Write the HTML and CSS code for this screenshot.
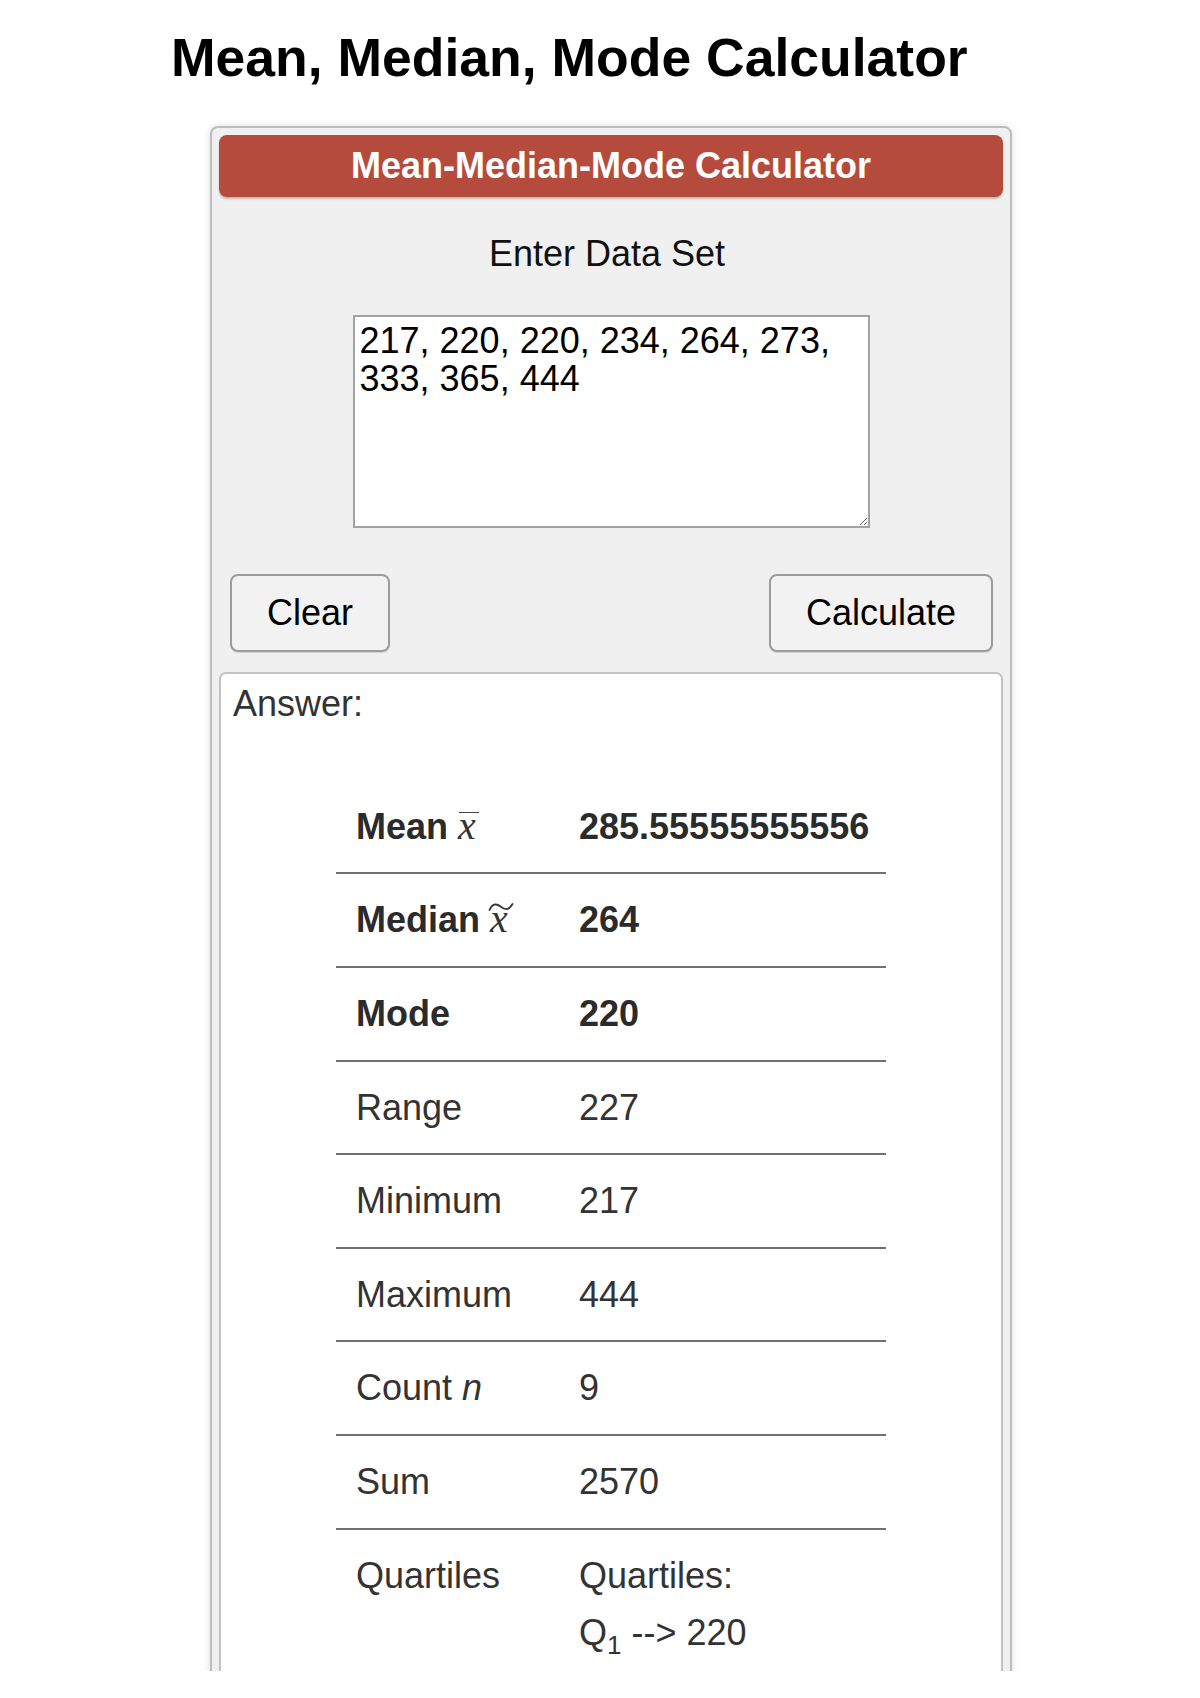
FILE: index.html
```html
<!DOCTYPE html>
<html lang="en">
<head>
<meta charset="utf-8">
<title>Mean, Median, Mode Calculator</title>
<link rel="stylesheet" href="styles.css">
</head>
<body>
<div class="page">
  <h1 class="title">Mean, Median, Mode Calculator</h1>
  <div class="card">
    <div class="card-head">Mean-Median-Mode Calculator</div>
    <div class="label">Enter Data Set</div>
    <textarea class="data" spellcheck="false">217, 220, 220, 234, 264, 273, 333, 365, 444</textarea>
    <div class="actions">
      <button class="btn" type="button">Clear</button>
      <button class="btn" type="button">Calculate</button>
    </div>
    <div class="answer">
      <div class="answer-label">Answer:</div>
      <table class="results">
        <colgroup><col class="c1"><col class="c2"></colgroup>
        <tbody>
          <tr class="strong"><td>Mean <span class="math bar">x</span></td><td>285.55555555556</td></tr>
          <tr class="strong"><td>Median <span class="math tilde">x<svg class="tilde-mark" viewBox="0 0 26 10" aria-hidden="true"><path d="M1.5 8 C4 2 8 1 12.5 4.5 S20.5 9 24.5 2" fill="none" stroke="#333" stroke-width="1.8" stroke-linecap="round"/></svg></span></td><td>264</td></tr>
          <tr class="strong"><td>Mode</td><td>220</td></tr>
          <tr><td>Range</td><td>227</td></tr>
          <tr><td>Minimum</td><td>217</td></tr>
          <tr><td>Maximum</td><td>444</td></tr>
          <tr><td>Count <em>n</em></td><td>9</td></tr>
          <tr><td>Sum</td><td>2570</td></tr>
          <tr class="last"><td>Quartiles</td><td>Quartiles:<br>Q<sub>1</sub> --&gt; 220</td></tr>
        </tbody>
      </table>
    </div>
  </div>
</div>
</body>
</html>
```
FILE: styles.css
```css
html, body {
  margin: 0;
  padding: 0;
  background: #ffffff;
}

body {
  font-family: "Liberation Sans", Arial, Helvetica, sans-serif;
  color: #111;
}

.page {
  height: 1671px;
  overflow: hidden;
}

.title {
  margin: 0;
  padding: 27px 0 0 171px;
  font-size: 53.5px;
  line-height: 61.5px;
  font-weight: bold;
  color: #000;
}

.card {
  box-sizing: border-box;
  width: 802px;
  margin: 37px 0 0 210px;
  padding: 7.5px 7px 0 7px;
  background: #f0f0f0;
  border: 2px solid #bdbdbd;
  border-radius: 8px;
  box-shadow: 0 0 7px rgba(0, 0, 0, 0.14);
}

.card-head {
  height: 61.5px;
  line-height: 61.5px;
  background: #b44b3c;
  color: #ffffff;
  font-size: 36px;
  font-weight: bold;
  text-align: center;
  border-radius: 8px;
  box-shadow: 0 2px 2px rgba(0, 0, 0, 0.22);
}

.label {
  margin-top: 36.5px;
  padding-right: 8px;
  font-size: 36px;
  line-height: 41.4px;
  text-align: center;
  color: #111;
}

.data {
  display: block;
  box-sizing: border-box;
  width: 517px;
  height: 213.5px;
  margin: 40.5px auto 0 auto;
  padding: 5px 5px;
  border: 2px solid #a3a3a3;
  border-radius: 0;
  background: #ffffff;
  font-family: "Liberation Sans", Arial, Helvetica, sans-serif;
  font-size: 36px;
  line-height: 38.5px;
  color: #000;
  resize: both;
  outline: none;
}

.actions {
  display: flex;
  justify-content: space-between;
  margin-top: 45.5px;
  padding: 0 10px 0 11px;
}

.btn {
  box-sizing: border-box;
  height: 78px;
  padding: 0 35px;
  font-family: "Liberation Sans", Arial, Helvetica, sans-serif;
  font-size: 36px;
  color: #000;
  background: #f2f2f2;
  border: 2px solid #9c9c9c;
  border-radius: 8px;
  box-shadow: 0 1px 1px rgba(0, 0, 0, 0.12);
}

.answer {
  margin-top: 20.5px;
  padding: 9px 11px 40px 11px;
  background: #ffffff;
  border: 2px solid #c2c2c2;
  border-radius: 7px;
  color: #333;
}

.answer-label {
  font-size: 36px;
  line-height: 41.4px;
  padding-left: 1px;
}

.results {
  width: 550px;
  margin: 56px auto 0 auto;
  border-collapse: collapse;
  table-layout: fixed;
  font-size: 36px;
  color: #333;
}

.results .c1 { width: 223px; }
.results .c2 { width: 327px; }

.results td {
  padding: 17px 20px;
  line-height: 57.6px;
  border-bottom: 2px solid #707070;
  vertical-align: top;
  white-space: nowrap;
}

.results tr.last td {
  border-bottom: none;
}

.results tr.strong td {
  font-weight: bold;
  color: #2b2b2b;
}

.math {
  position: relative;
  display: inline-block;
  font-family: "Liberation Serif", "DejaVu Serif", serif;
  font-style: italic;
  font-weight: normal;
  font-size: 40px;
  line-height: 1;
  color: #333;
}

.math.bar::before {
  content: "";
  position: absolute;
  left: 1px;
  right: -3px;
  top: 6px;
  border-top: 1.5px solid #444;
}

.tilde-mark {
  position: absolute;
  left: -2px;
  top: 3px;
  width: 26px;
  height: 10px;
}

.results em {
  font-style: italic;
}

.results sub {
  font-size: 26px;
  line-height: 0;
  vertical-align: -9px;
}
```
